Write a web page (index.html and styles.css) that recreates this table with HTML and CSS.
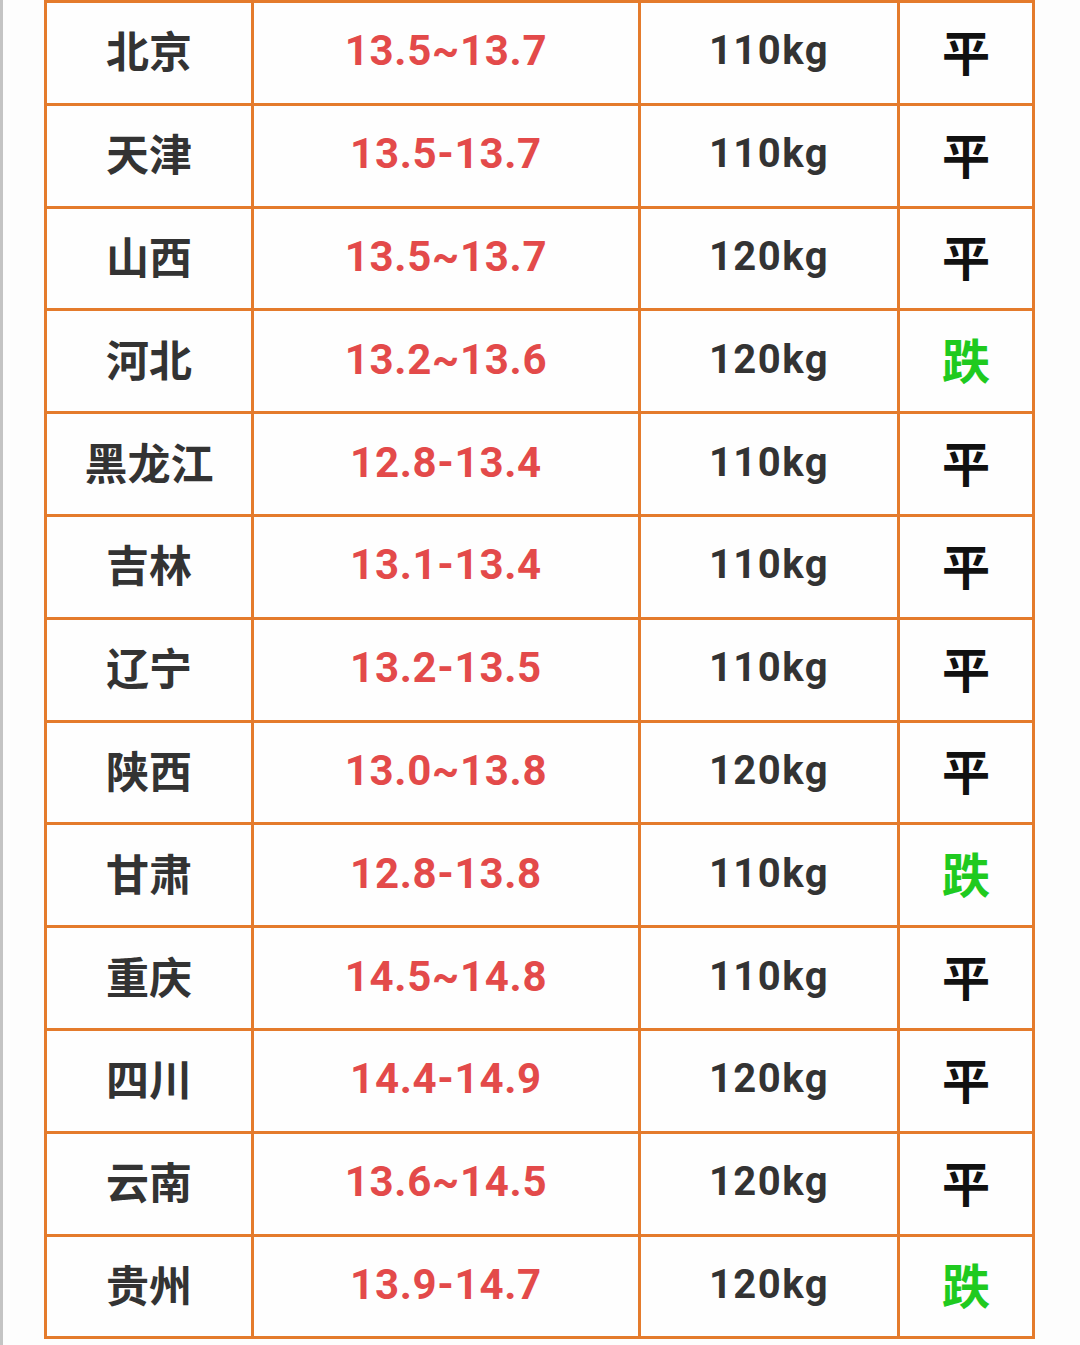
FILE: index.html
```html
<!DOCTYPE html>
<html lang="zh">
<head>
<meta charset="utf-8">
<link rel="stylesheet" href="styles.css">
</head>
<body>
<div class="page">
  <div class="grid">
    <div class="c city">北京</div><div class="c price">13.5~13.7</div><div class="c wt">110kg</div><div class="c tr flat">平</div>
    <div class="c city">天津</div><div class="c price">13.5-13.7</div><div class="c wt">110kg</div><div class="c tr flat">平</div>
    <div class="c city">山西</div><div class="c price">13.5~13.7</div><div class="c wt">120kg</div><div class="c tr flat">平</div>
    <div class="c city">河北</div><div class="c price">13.2~13.6</div><div class="c wt">120kg</div><div class="c tr down">跌</div>
    <div class="c city">黑龙江</div><div class="c price">12.8-13.4</div><div class="c wt">110kg</div><div class="c tr flat">平</div>
    <div class="c city">吉林</div><div class="c price">13.1-13.4</div><div class="c wt">110kg</div><div class="c tr flat">平</div>
    <div class="c city">辽宁</div><div class="c price">13.2-13.5</div><div class="c wt">110kg</div><div class="c tr flat">平</div>
    <div class="c city">陕西</div><div class="c price">13.0~13.8</div><div class="c wt">120kg</div><div class="c tr flat">平</div>
    <div class="c city">甘肃</div><div class="c price">12.8-13.8</div><div class="c wt">110kg</div><div class="c tr down">跌</div>
    <div class="c city">重庆</div><div class="c price">14.5~14.8</div><div class="c wt">110kg</div><div class="c tr flat">平</div>
    <div class="c city">四川</div><div class="c price">14.4-14.9</div><div class="c wt">120kg</div><div class="c tr flat">平</div>
    <div class="c city">云南</div><div class="c price">13.6~14.5</div><div class="c wt">120kg</div><div class="c tr flat">平</div>
    <div class="c city">贵州</div><div class="c price">13.9-14.7</div><div class="c wt">120kg</div><div class="c tr down">跌</div>
  </div>
</div>
</body>
</html>
```
FILE: styles.css
```css
html, body {
  margin: 0;
  padding: 0;
  background: #fdfdfd;
}
.page {
  width: 1080px;
  height: 1345px;
  box-sizing: border-box;
  border-left: 3px solid #c4c4c4;
  padding-left: 41px;
  overflow: hidden;
}
.grid {
  display: grid;
  grid-template-columns: 207px 387px 259px 135px;
  grid-auto-rows: 102.8px;
  width: 991px;
  box-sizing: border-box;
  border-top: 3px solid #e47b2c;
  border-left: 3px solid #e47b2c;
}
.c {
  display: flex;
  align-items: center;
  justify-content: center;
  box-sizing: border-box;
  border-right: 3px solid #e47b2c;
  border-bottom: 3px solid #e47b2c;
  background: #fefefe;
  line-height: 1;
}
.city {
  font-family: "Noto Sans CJK SC", sans-serif;
  font-weight: 700;
  font-size: 43px;
  color: #333333;
  padding-bottom: 6px;
}
.price {
  font-family: Roboto, "Noto Sans", sans-serif;
  font-weight: 700;
  font-size: 42px;
  letter-spacing: 0.7px;
  color: #e34a4a;
  padding-bottom: 3px;
}
.wt {
  font-family: Roboto, "Noto Sans", sans-serif;
  font-weight: 700;
  font-size: 40px;
  letter-spacing: 1.5px;
  color: #333333;
  padding-bottom: 3px;
}
.tr {
  font-family: "Noto Sans CJK SC", sans-serif;
  font-weight: 700;
  font-size: 48px;
  padding-bottom: 6px;
}
.flat { color: #111111; }
.down { color: #1fca1f; }
```
